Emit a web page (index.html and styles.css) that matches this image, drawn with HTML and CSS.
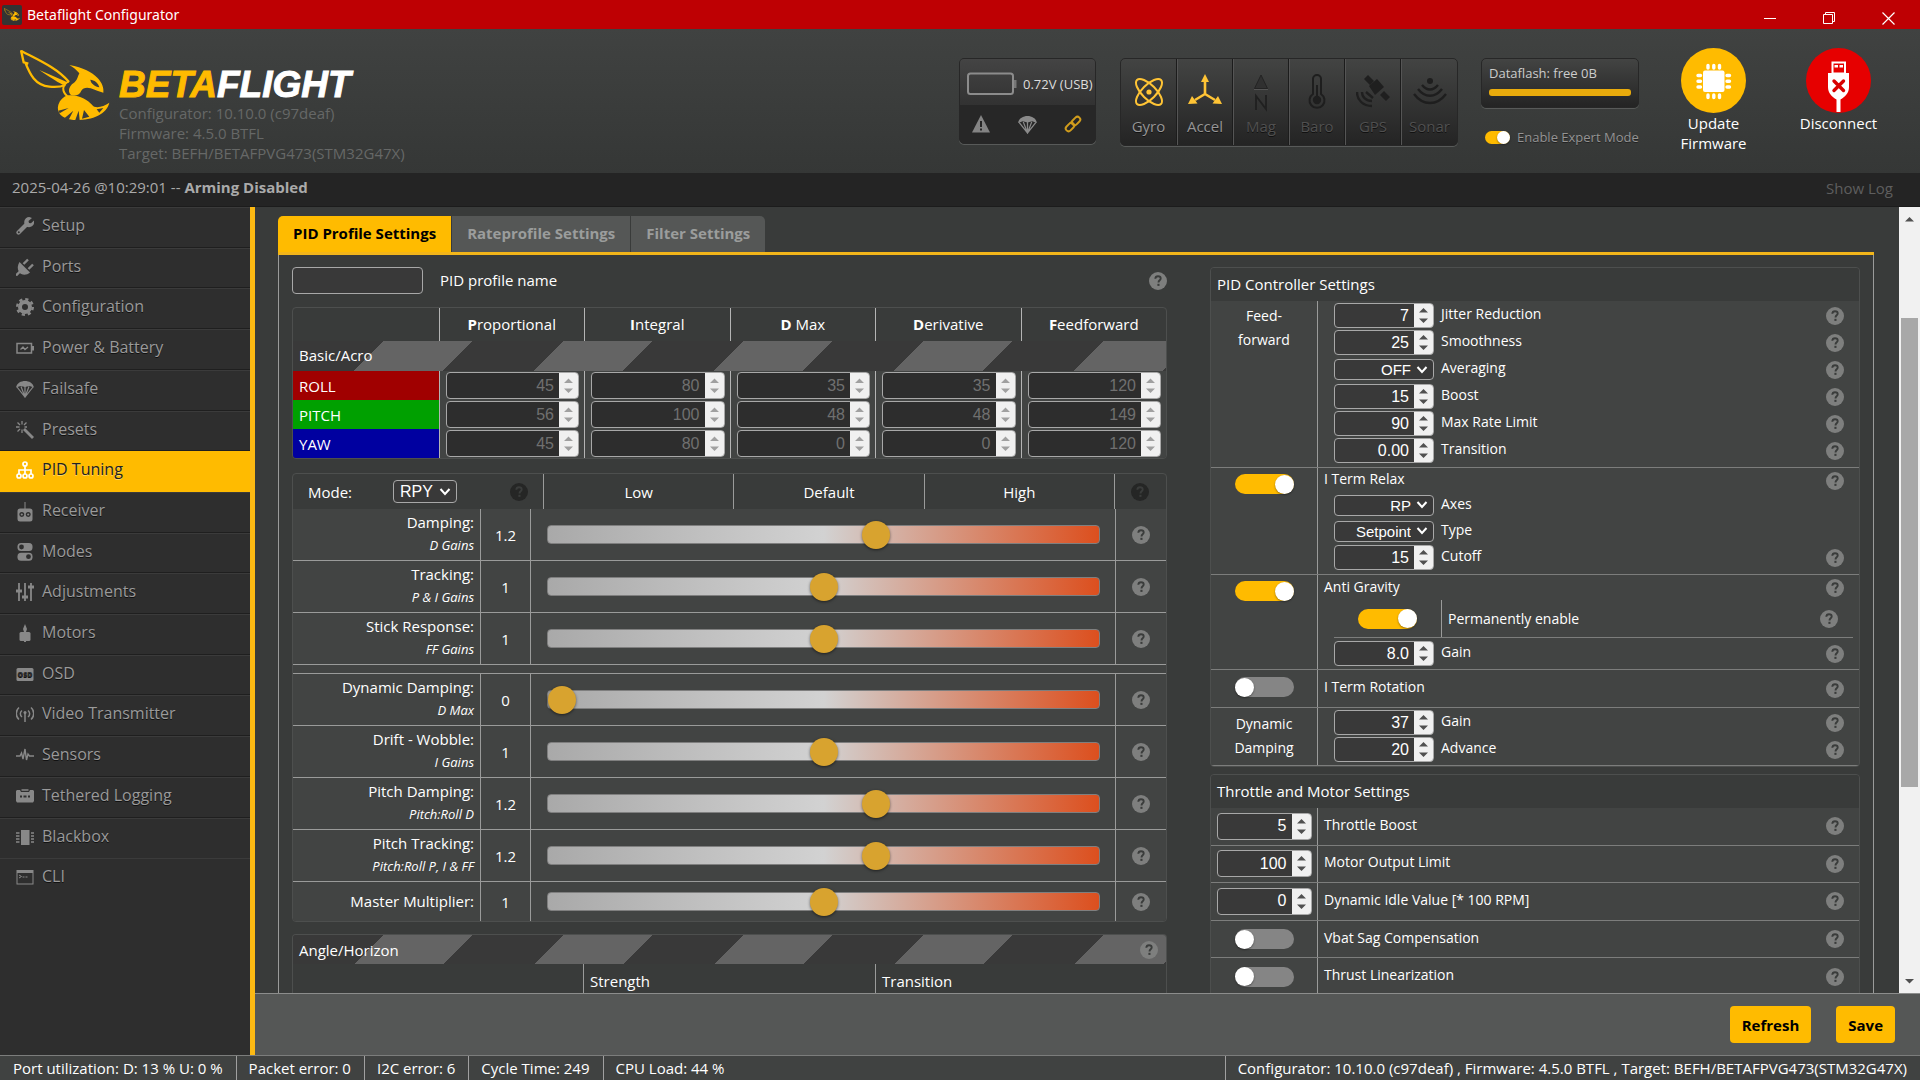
FILE: index.html
```html
<!DOCTYPE html>
<html lang="en">
<head>
<meta charset="utf-8">
<title>Betaflight Configurator</title>
<meta name="viewport" content="width=device-width, initial-scale=1">
<link rel="stylesheet" href="styles.css">
</head>
<body>
<svg class="defs" width="0" height="0" aria-hidden="true">
  <defs>
    <symbol id="help" viewBox="0 0 18 18"><circle cx="9" cy="9" r="9" fill="currentColor"/><path d="M6.3 6.8C6.4 5.1 7.5 4.3 9 4.3s2.7.9 2.7 2.3c0 1.7-2.2 1.8-2.2 3.8" fill="none" stroke="#3a3c3b" stroke-width="1.9"/><rect x="8.4" y="11.8" width="2.1" height="2.1" fill="#3a3c3b"/></symbol>
    <symbol id="bee" viewBox="0 0 270 214">
      <g fill="none" stroke="#ffbb00" stroke-width="7" stroke-linejoin="miter">
        <path d="M4 5 C55 32 110 55 147 98"/>
        <path d="M3 3 L11 39 L25 43 M16 40 C30 75 45 108 88 112 C108 114 122 113 136 107"/>
        <path d="M146 96 C124 108 126 126 142 141" stroke-width="6"/>
      </g>
      <path d="M58 62 L142 99 L136 107 C120 98 108 92 96 84 L140 104 L128 106 C108 96 88 82 58 62Z" fill="#ffbb00"/>
      <path d="M148 47 C190 54 216 69 232 85 C246 99 252 116 250 130 C238 128 226 122 212 117 C200 113 188 116 184 124 C178 138 164 142 152 136 C142 126 148 110 160 102 C172 94 172 84 178 72 C168 60 160 54 148 47Z" fill="#ffbb00"/>
      <path d="M211 91 C222 91 236 102 238 114 C225 111 213 104 211 91Z" fill="#3b3d3c"/>
      <path d="M144 138 C176 134 204 152 216 166 C226 180 250 172 268 160 C260 196 214 214 160 212 C126 208 108 190 115 166 C120 152 130 142 144 138Z" fill="#ffbb00"/>
      <path d="M115 184 L146 176 L119 192Z M133 207 L160 184 L146 211Z M165 214 L176 184 L179 212Z M186 208 L192 182 L208 202Z M238 190 L230 180 L250 176Z" fill="#3b3d3c"/>
    </symbol>
    <symbol id="parachute" viewBox="0 0 18 18"><path d="M0 7.500C1 3 5 1 9 1s8 2 9 6.500L13.500 6 9 7 4.500 6Z" fill="currentColor"/><path d="M1 7l8 10 8-10M5 6.500L9 17l4-10.500M9 6v10" fill="none" stroke="currentColor" stroke-width="1.200"/></symbol>
  </defs>
</svg>

<header class="titlebar">
  <span class="app-icon"><svg width="16" height="13"><use href="#bee"/></svg></span>
  <span class="app-name">Betaflight Configurator</span>
  <div class="window-buttons">
    <button type="button" aria-label="Minimize"><svg width="13" height="13" viewBox="0 0 13 13"><path d="M0 6.500h12" stroke="#fff"/></svg></button>
    <button type="button" aria-label="Restore"><svg width="13" height="13" viewBox="0 0 13 13"><path d="M.5 2.500h9v9h-9zM2.500 2.500v-2h9v9h-2" fill="none" stroke="#fff"/></svg></button>
    <button type="button" aria-label="Close"><svg width="13" height="13" viewBox="0 0 13 13"><path d="M.5 .5l12 12M12.500 .5l-12 12" stroke="#fff" stroke-width="1.200"/></svg></button>
  </div>
</header>

<div class="topbar">
  <div class="logo">
    <svg class="bee" width="90" height="72" role="img" aria-label="Betaflight bee"><use href="#bee"/></svg>
    <div class="logo-text">
      <div class="wordmark"><span>BETA</span>FLIGHT</div>
      <div>Configurator: 10.10.0 (c97deaf)</div>
      <div>Firmware: 4.5.0 BTFL</div>
      <div>Target: BEFH/BETAFPVG473(STM32G47X)</div>
    </div>
  </div>
  <div class="battery panel">
    <div class="battery-top">
      <svg width="50" height="24" viewBox="0 0 50 24"><rect x="1" y="1.500" width="45" height="20.500" rx="2.500" fill="none" stroke="#8c8c8c" stroke-width="2"/><path d="M47 8h2.500v8H47z" fill="#777"/></svg>
      <span>0.72V (USB)</span>
    </div>
    <div class="battery-icons">
      <svg width="18" height="18" viewBox="0 0 18 18"><path d="M9 0l9 17.500H0z" fill="#848484"/><path d="M9 6v6M9 13.500v2" stroke="#262626" stroke-width="2"/></svg>
      <svg class="grey" width="19" height="19"><use href="#parachute"/></svg>
      <svg width="18" height="18" viewBox="0 0 18 18" fill="none" stroke="#d09c1c" stroke-width="2"><rect x="-4.800" y="-2.800" width="9.600" height="5.600" rx="2.800" transform="translate(6 12) rotate(-45)"/><rect x="-4.800" y="-2.800" width="9.600" height="5.600" rx="2.800" transform="translate(12 6) rotate(-45)"/></svg>
    </div>
  </div>
  <ul class="sensors panel">
    <li class="on"><svg width="32" height="36" viewBox="0 0 32 36" fill="none" stroke="#ffc435" stroke-width="2"><ellipse cx="16" cy="18" rx="17" ry="7" transform="rotate(45 16 18)"/><ellipse cx="16" cy="18" rx="17" ry="7" transform="rotate(-45 16 18)"/><circle cx="16" cy="18" r="2.600" fill="#ffc435" stroke="none"/></svg>Gyro</li>
    <li class="on"><svg width="34" height="36" viewBox="0 0 34 36"><path d="M17 8v13M17 20L7 26M17 20l10 6" stroke="#ffc435" stroke-width="2.600" fill="none"/><path d="M17 0l4 8h-8zM0 30l4-8 5.500 7.500zM34 30l-4-8-5.500 7.500z" fill="#ffc435"/></svg>Accel</li>
    <li><svg width="16" height="38" viewBox="0 0 16 38"><path d="M8 1l6.500 13.500h-13z" fill="#303030" stroke="#232323"/><path d="M1 15.500h14" stroke="#555"/><path d="M3 36V22l10 13V21" fill="none" stroke="#202020" stroke-width="1.800"/></svg>Mag</li>
    <li><svg width="20" height="36" viewBox="0 0 20 36"><path d="M6 20V5a4 4 0 0 1 8 0v15a7.500 7.500 0 1 1-8 0Z" fill="none" stroke="#1e1e1e" stroke-width="2"/><circle cx="10" cy="26" r="4.200" fill="#1e1e1e"/><path d="M10 11v14" stroke="#1e1e1e" stroke-width="2"/></svg>Baro</li>
    <li><svg width="34" height="34" viewBox="0 0 34 34"><path d="M8 5l4-4 6 6-4 4zM13 12l8-7 7 8-9 8zM24 21l4-4 6 6-4 4z" fill="#1f1f1f"/><path d="M10 18l7 6M1 18c0 8 6 14 15 14M6 18c0 5 4 9 10 9" fill="none" stroke="#1f1f1f" stroke-width="2.400"/></svg>GPS</li>
    <li><svg width="36" height="34" viewBox="0 0 36 34" fill="none" stroke="#1e1e1e" stroke-width="2.400"><path d="M2 20c9 12 23 12 32 0M6 15c7 9 17 9 24 0M10 11c5 6 11 6 16 0"/><circle cx="18" cy="7" r="3" fill="#1e1e1e" stroke="none"/></svg>Sonar</li>
  </ul>
  <div class="flash">
    <div class="dataflash panel"><label for="df">Dataflash: free 0B</label><progress id="df" value="1" max="1"></progress></div>
    <label class="expert"><input class="switch small" type="checkbox" checked>Enable Expert Mode</label>
  </div>
  <button class="round-action" type="button">
    <svg width="65" height="65" viewBox="0 0 65 65"><circle cx="32.500" cy="32.500" r="32.500" fill="#ffbb00"/><rect x="22" y="22.500" width="21.500" height="21.500" rx="2" fill="#fff"/><path d="M27 17.500v2.500M32.800 17.500v2.500M38.500 17.500v2.500M27 47v2.500M32.800 47v2.500M38.500 47v2.500M17 27.500h2.500M17 33.300h2.500M17 39h2.500M46 27.500h2.500M46 33.300h2.500M46 39h2.500" stroke="#fff" stroke-width="3.400" stroke-linecap="round"/></svg>
    Update<br>Firmware
  </button>
  <button class="round-action" type="button">
    <svg width="65" height="65" viewBox="0 0 65 65"><circle cx="32.500" cy="32.500" r="32.500" fill="#e60000"/><path d="M25.500 13.500h14.500V25H43v14c0 6-4 10-8.500 12.500V64h-4V51.500C26 49 22 45 22 39V25h3.500z" fill="#fff"/><path d="M27.500 15.500h10.500v9h-10.500z" fill="#e60000"/><path d="M28.500 17h3.500v2.500h-3.500zM33.500 17h3.500v2.500h-3.500z" fill="#fff"/><path d="M28 33l9.500 9.500M37.500 33L28 42.500" stroke="#d80000" stroke-width="3.400" stroke-linecap="round"/></svg>
    Disconnect
  </button>
</div>

<div class="logbar"><span>2025-04-26 @10:29:01 -- <b>Arming Disabled</b></span><a href="#">Show Log</a></div>

<div class="middle">
  <nav class="sidebar">
    <a href="#"><svg width="18" height="18" viewBox="0 0 18 18"><path d="M2.500 15.500L10 8" stroke="currentColor" stroke-width="4.200" stroke-linecap="round"/><path d="M16 1l-3.500 3 .5 2 2 .3L17.900 3.500A5 5 0 1 1 14 .2z" fill="currentColor"/><circle cx="2.800" cy="15.300" r="1" fill="#2e2e2e"/></svg>Setup</a>
    <a href="#"><svg width="18" height="18" viewBox="0 0 18 18"><path d="M3.500 4L14 14.500C10 18 5 17 3 14 1 11 1.500 7 3.500 4Z" fill="currentColor"/><path d="M7.500 6L12 1.500M12.500 11L17 6.500M0 17.500l4-4" stroke="currentColor" stroke-width="2.400"/></svg>Ports</a>
    <a href="#"><svg width="18" height="18" viewBox="0 0 18 18" fill="none" stroke="currentColor"><circle cx="9" cy="9" r="5" stroke-width="4"/><circle cx="9" cy="9" r="7.800" stroke-width="2.400" stroke-dasharray="3.200 2.926"/></svg>Configuration</a>
    <a href="#"><svg width="18" height="18" viewBox="0 0 18 18" fill="none" stroke="currentColor"><rect x="1" y="4.500" width="14.500" height="9.500" stroke-width="1.500"/><path d="M17 7v4.500" stroke-width="2"/><path d="M4.500 10.500L7 8l2 2.500L12 8" stroke-width="1.300"/></svg>Power &amp; Battery</a>
    <a href="#"><svg width="18" height="18"><use href="#parachute"/></svg>Failsafe</a>
    <a href="#"><svg width="18" height="18" viewBox="0 0 18 18" stroke="currentColor" fill="none"><path d="M8 8l9 9" stroke-width="2.800"/><path d="M6 0v3.500M6 8.500V12M0 6h3.500M1.500 1.500L4 4M10.500 1.500L8 4M1.500 10.500L4 8M8.500 6H11" stroke-width="1.300"/></svg>Presets</a>
    <a class="active" href="#" aria-current="page"><svg width="18" height="18" viewBox="0 0 18 18" fill="none" stroke="currentColor" stroke-width="1.700"><circle cx="9" cy="3" r="2"/><circle cx="3" cy="15" r="2"/><circle cx="9" cy="15" r="2"/><circle cx="15" cy="15" r="2"/><path d="M9 5v8M3 13V9h12v4"/></svg>PID Tuning</a>
    <a href="#"><svg width="18" height="20" viewBox="0 0 18 20"><rect x="1.500" y="6.500" width="15" height="13" rx="2.500" fill="currentColor"/><path d="M9 0v7" stroke="currentColor"/><g fill="currentColor" stroke="#2e2e2e" stroke-width="1.400"><circle cx="5.800" cy="12.500" r="1.800"/><circle cx="12.200" cy="12.500" r="1.800"/></g></svg>Receiver</a>
    <a href="#"><svg width="18" height="18" viewBox="0 0 18 18"><rect x="1.500" y="0" width="15" height="8" rx="3.500" fill="currentColor"/><rect x="1.500" y="9.700" width="15" height="8" rx="3.500" fill="currentColor"/><circle cx="5.500" cy="4" r="2.400" fill="#2e2e2e"/><circle cx="12.500" cy="13.700" r="2.400" fill="#2e2e2e"/></svg>Modes</a>
    <a href="#"><svg width="18" height="18" viewBox="0 0 18 18" stroke="currentColor" fill="none"><path d="M3 0v18M9 0v18M15 0v18" stroke-width="1.800"/><path d="M0 8h6M6 14h6M12 4h6" stroke-width="3"/></svg>Adjustments</a>
    <a href="#"><svg width="18" height="18" viewBox="0 0 18 18"><rect x="3.500" y="8" width="11" height="9" rx="1.500" fill="currentColor"/><path d="M9 0l2 5-1 3H8L7 5zM8 17h2v1H8z" fill="currentColor"/></svg>Motors</a>
    <a href="#"><svg width="18" height="18" viewBox="0 0 18 18"><rect x=".5" y="3" width="17" height="13" rx="1.500" fill="currentColor"/><text x="9" y="12" font-family="Open Sans, sans-serif" font-weight="800" font-size="7" text-anchor="middle" fill="#2e2e2e">OSD</text></svg>OSD</a>
    <a href="#"><svg width="18" height="18" viewBox="0 0 18 18" fill="none" stroke="currentColor" stroke-width="1.500"><path d="M9 7v10M6 5.500a4 4 0 0 0 0 6.500M12 5.500a4 4 0 0 1 0 6.500M3 2.500a8 8 0 0 0 0 12M15 2.500a8 8 0 0 1 0 12"/><circle cx="9" cy="7.500" r="1.500" fill="currentColor" stroke="none"/></svg>Video Transmitter</a>
    <a href="#"><svg width="18" height="18" viewBox="0 0 18 18" fill="none" stroke="currentColor" stroke-width="1.400"><path d="M0 10h4l1.500-3 1.500 6 2-10 1.500 11L12 8l1.500 2H18"/></svg>Sensors</a>
    <a href="#"><svg width="18" height="18" viewBox="0 0 18 18"><path d="M0 4l1-1h3l1 2h8l1-2h3l1 1v10l-1 1.500H1L0 14z" fill="currentColor"/><path d="M5.500 3h7" stroke="currentColor" stroke-width="1.500"/><path d="M4 9.500h2M7.500 9.500h3M12 9.500h2" stroke="#2e2e2e" stroke-width="2"/></svg>Tethered Logging</a>
    <a href="#"><svg width="18" height="18" viewBox="0 0 18 18"><path d="M5 2h8.500v15H5z" fill="currentColor"/><path d="M0 5h3.500M0 8h3.500M0 11h3.500M0 14h3.500M15 5h3M15 8h3M15 11h3M15 14h3" stroke="currentColor" stroke-width="1.500"/></svg>Blackbox</a>
    <a href="#"><svg width="18" height="18" viewBox="0 0 18 18" fill="none" stroke="currentColor"><rect x="1" y="2.500" width="16" height="13.500"/><path d="M1 4h16" stroke-width="2"/><path d="M3 7l2.500 1.500L3 10M6.500 9h2M9.500 9h2"/></svg>CLI</a>
  </nav>

  <div class="content">
    <div class="viewport">
      <main class="scroller">
        <div class="tabs" role="tablist">
          <button type="button" role="tab" aria-selected="true">PID Profile Settings</button>
          <button type="button" role="tab" aria-selected="false">Rateprofile Settings</button>
          <button type="button" role="tab" aria-selected="false">Filter Settings</button>
        </div>
        <div class="tab-body">
          <section class="left">
            <div class="profile-row"><input type="text" id="profile"><label for="profile">PID profile name</label><svg class="help"><use href="#help"/></svg></div>
            <table class="card pid-table">
              <thead><tr><td></td><th><b>P</b>roportional</th><th><b>I</b>ntegral</th><th><b>D</b> Max</th><th><b>D</b>erivative</th><th><b>F</b>eedforward</th></tr></thead>
              <tbody>
                <tr class="mode-row"><td class="stripe" colspan="6">Basic/Acro</td></tr>
                <tr><th class="roll" scope="row">ROLL</th><td><input type="number" disabled value="45" aria-label="Roll P"></td><td><input type="number" disabled value="80" aria-label="Roll I"></td><td><input type="number" disabled value="35" aria-label="Roll D Max"></td><td><input type="number" disabled value="35" aria-label="Roll D"></td><td><input type="number" disabled value="120" aria-label="Roll F"></td></tr>
                <tr><th class="pitch" scope="row">PITCH</th><td><input type="number" disabled value="56" aria-label="Pitch P"></td><td><input type="number" disabled value="100" aria-label="Pitch I"></td><td><input type="number" disabled value="48" aria-label="Pitch D Max"></td><td><input type="number" disabled value="48" aria-label="Pitch D"></td><td><input type="number" disabled value="149" aria-label="Pitch F"></td></tr>
                <tr><th class="yaw" scope="row">YAW</th><td><input type="number" disabled value="45" aria-label="Yaw P"></td><td><input type="number" disabled value="80" aria-label="Yaw I"></td><td><input type="number" disabled value="0" aria-label="Yaw D Max"></td><td><input type="number" disabled value="0" aria-label="Yaw D"></td><td><input type="number" disabled value="120" aria-label="Yaw F"></td></tr>
              </tbody>
            </table>

            <div class="card sliders">
              <div class="slider-head">
                <div class="mode"><label for="mode">Mode:</label><select id="mode"><option>RPY</option></select><svg class="help dark"><use href="#help"/></svg></div>
                <div>Low</div><div>Default</div><div>High</div><div><svg class="help dark"><use href="#help"/></svg></div>
              </div>
              <div class="slider-row"><label for="s1">Damping:<i>D Gains</i></label><output>1.2</output><div class="track"><input id="s1" type="range" min="0" max="2" step="0.05" value="1.2"></div><svg class="help"><use href="#help"/></svg></div>
              <div class="slider-row"><label for="s2">Tracking:<i>P &amp; I Gains</i></label><output>1</output><div class="track"><input id="s2" type="range" min="0" max="2" step="0.05" value="1"></div><svg class="help"><use href="#help"/></svg></div>
              <div class="slider-row"><label for="s3">Stick Response:<i>FF Gains</i></label><output>1</output><div class="track"><input id="s3" type="range" min="0" max="2" step="0.05" value="1"></div><svg class="help"><use href="#help"/></svg></div>
              <div class="slider-gap"></div>
              <div class="slider-row"><label for="s4">Dynamic Damping:<i>D Max</i></label><output>0</output><div class="track"><input id="s4" type="range" min="0" max="2" step="0.05" value="0"></div><svg class="help"><use href="#help"/></svg></div>
              <div class="slider-row"><label for="s5">Drift - Wobble:<i>I Gains</i></label><output>1</output><div class="track"><input id="s5" type="range" min="0" max="2" step="0.05" value="1"></div><svg class="help"><use href="#help"/></svg></div>
              <div class="slider-row"><label for="s6">Pitch Damping:<i>Pitch:Roll D</i></label><output>1.2</output><div class="track"><input id="s6" type="range" min="0" max="2" step="0.05" value="1.2"></div><svg class="help"><use href="#help"/></svg></div>
              <div class="slider-row"><label for="s7">Pitch Tracking:<i>Pitch:Roll P, I &amp; FF</i></label><output>1.2</output><div class="track"><input id="s7" type="range" min="0" max="2" step="0.05" value="1.2"></div><svg class="help"><use href="#help"/></svg></div>
              <div class="slider-row last"><label for="s8">Master Multiplier:</label><output>1</output><div class="track"><input id="s8" type="range" min="0" max="2" step="0.05" value="1"></div><svg class="help"><use href="#help"/></svg></div>
            </div>

            <div class="card angle">
              <div class="stripe angle-title"><span>Angle/Horizon</span><svg class="help"><use href="#help"/></svg></div>
              <div class="angle-head"><span></span><span>Strength</span><span>Transition</span></div>
            </div>
          </section>

          <section class="right">
            <div class="card">
              <h2>PID Controller Settings</h2>
              <div class="group ff"><div class="side">Feed-<br>forward</div><div class="fields">
                <div class="field"><input type="number" id="f1" value="7"><label for="f1">Jitter Reduction</label><svg class="help"><use href="#help"/></svg></div>
                <div class="field"><input type="number" id="f2" value="25"><label for="f2">Smoothness</label><svg class="help"><use href="#help"/></svg></div>
                <div class="field"><select id="f3"><option>OFF</option></select><label for="f3">Averaging</label><svg class="help"><use href="#help"/></svg></div>
                <div class="field"><input type="number" id="f4" value="15"><label for="f4">Boost</label><svg class="help"><use href="#help"/></svg></div>
                <div class="field"><input type="number" id="f5" value="90"><label for="f5">Max Rate Limit</label><svg class="help"><use href="#help"/></svg></div>
                <div class="field"><input type="text" inputmode="decimal" class="num" id="f6" value="0.00"><label for="f6">Transition</label><svg class="help"><use href="#help"/></svg></div>
              </div></div>
              <div class="group relax"><div class="side"><input id="relax" class="switch" type="checkbox" checked></div><div class="fields">
                <div class="field title"><label for="relax">I Term Relax</label><svg class="help"><use href="#help"/></svg></div>
                <div class="field"><select id="f7"><option>RP</option></select><label for="f7">Axes</label></div>
                <div class="field"><select id="f8"><option>Setpoint</option></select><label for="f8">Type</label></div>
                <div class="field"><input type="number" id="f9" value="15"><label for="f9">Cutoff</label><svg class="help"><use href="#help"/></svg></div>
              </div></div>
              <div class="group gravity"><div class="side"><input id="gravity" class="switch" type="checkbox" checked></div><div class="fields">
                <div class="field title"><label for="gravity">Anti Gravity</label><svg class="help"><use href="#help"/></svg></div>
                <div class="nested"><div><input id="perm" class="switch" type="checkbox" checked></div><label for="perm">Permanently enable</label><svg class="help"><use href="#help"/></svg></div>
                <div class="field"><input type="text" inputmode="decimal" class="num" id="f10" value="8.0"><label for="f10">Gain</label><svg class="help"><use href="#help"/></svg></div>
              </div></div>
              <div class="group rotation"><div class="side"><input id="rotation" class="switch" type="checkbox"></div><div class="fields single">
                <div class="field title"><label for="rotation">I Term Rotation</label><svg class="help"><use href="#help"/></svg></div>
              </div></div>
              <div class="group"><div class="side">Dynamic<br>Damping</div><div class="fields">
                <div class="field"><input type="number" id="f11" value="37"><label for="f11">Gain</label><svg class="help"><use href="#help"/></svg></div>
                <div class="field"><input type="number" id="f12" value="20"><label for="f12">Advance</label><svg class="help"><use href="#help"/></svg></div>
              </div></div>
            </div>

            <div class="card motor">
              <h2>Throttle and Motor Settings</h2>
              <div class="motor-rows">
                <div class="group"><div class="side"><input type="number" id="m1" value="5"></div><div class="fields single"><div class="field title"><label for="m1">Throttle Boost</label><svg class="help"><use href="#help"/></svg></div></div></div>
                <div class="group"><div class="side"><input type="number" id="m2" value="100"></div><div class="fields single"><div class="field title"><label for="m2">Motor Output Limit</label><svg class="help"><use href="#help"/></svg></div></div></div>
                <div class="group"><div class="side"><input type="number" id="m3" value="0"></div><div class="fields single"><div class="field title"><label for="m3">Dynamic Idle Value [* 100 RPM]</label><svg class="help"><use href="#help"/></svg></div></div></div>
                <div class="group"><div class="side"><input type="checkbox" class="switch" id="m4"></div><div class="fields single"><div class="field title"><label for="m4">Vbat Sag Compensation</label><svg class="help"><use href="#help"/></svg></div></div></div>
                <div class="group"><div class="side"><input type="checkbox" class="switch" id="m5"></div><div class="fields single"><div class="field title"><label for="m5">Thrust Linearization</label><svg class="help"><use href="#help"/></svg></div></div></div>
              </div>
            </div>
          </section>
        </div>
      </main>
      <div class="scrollbar" aria-hidden="true">
        <svg width="21" height="24" viewBox="0 0 21 24"><path d="M6 14.500h9l-4.500-4.500z" fill="#505050"/></svg>
        <div class="scroll-lane"><div class="scroll-thumb"></div></div>
        <svg width="21" height="24" viewBox="0 0 21 24"><path d="M6 10h9l-4.500 4.500z" fill="#505050"/></svg>
      </div>
    </div>
    <div class="toolbar"><button type="button">Refresh</button><button type="button">Save</button></div>
  </div>
</div>

<footer class="statusbar">
  <span>Port utilization: D: 13 % U: 0 %</span><span>Packet error: 0</span><span>I2C error: 6</span><span>Cycle Time: 249</span><span>CPU Load: 44 %</span>
  <span class="version">Configurator: 10.10.0 (c97deaf) , Firmware: 4.5.0 BTFL , Target: BEFH/BETAFPVG473(STM32G47X)</span>
</footer>
</body>
</html>
```
FILE: styles.css
```css
:root {
  --amber: #ffbb00;
  --page: #393b3a;
  --row: #424443;
  --line: #9a9b9a;
  --rule: #7c7d7c;
}
* { box-sizing: border-box; }
body {
  margin: 0;
  height: 100vh;
  display: flex;
  flex-direction: column;
  overflow: hidden;
  background: var(--page);
  color: #fff;
  font: 15px/20px "Open Sans", "Noto Sans", sans-serif;
}
button, input, select { font: inherit; color: inherit; margin: 0; }
button { border: 0; background: none; padding: 0; }
svg { display: block; flex: none; }
a { color: inherit; text-decoration: none; }
.defs { position: absolute; }

/* Window title */
.titlebar { display: flex; align-items: center; height: 29px; flex: none; background: #be0003; padding: 0 2px; }
.app-icon { width: 20px; height: 20px; background: #333; border-radius: 2px; display: grid; place-items: center; }
.app-name { margin-left: 5px; font-size: 14px; font-family: "Noto Sans", sans-serif; }
.window-buttons { margin-left: auto; display: flex; }
.window-buttons button { width: 59px; height: 29px; display: grid; place-items: center; padding-top: 7px; }

/* Header */
.topbar { display: flex; height: 144px; flex: none; background: linear-gradient(#404241, #353736); }
.topbar > * { flex: none; }
.logo { display: flex; padding-left: 20px; margin-right: auto; color: #666867; }
.bee { margin-top: 20px; }
.logo-text { padding-left: 9px; padding-top: 38px; }
.wordmark { font: italic bold 37px/36px "Liberation Sans", Arial, sans-serif; color: #fff; -webkit-text-stroke: 1px; }
.wordmark span { color: var(--amber); }
.panel {
  border: 1px solid #272727;
  border-radius: 5px;
  background: linear-gradient(#434443, #242424);
  box-shadow: 0 1px 0 #585a59;
}
.battery { width: 137px; height: 86px; margin-top: 29px; background: #272727; overflow: hidden; }
.battery-top { display: flex; gap: 6px; height: 46px; padding: 3px 0 0 7px; align-items: center; background: linear-gradient(#444, #323232); font-size: 13px; white-space: nowrap; color: #ddd; }
.battery-icons { display: flex; height: 38px; align-items: center; justify-content: space-between; padding: 0 13px 0 12px; }
.grey { color: #8a8a8a; }
.sensors { list-style: none; margin: 29px 0 0 24px; padding: 0; height: 88px; display: flex; }
.sensors li { width: 56px; border-left: 1px solid #555; border-right: 1px solid #1c1c1c; display: flex; flex-direction: column; justify-content: space-between; align-items: center; padding: 15px 0 9px; color: #505050; text-shadow: 0 1px #111; }
.sensors li:first-child { border-left: 0; }
.sensors li:last-child { border-right: 0; }
.sensors .on { color: #969696; }
.flash { width: 158px; margin: 29px 32px 0 23px; }
.dataflash { height: 50px; padding: 4px 7px; font-size: 13px; color: #ccc; }
.dataflash label { display: block; }
progress { display: block; appearance: none; width: 100%; height: 7px; margin-top: 6px; border: 0; border-radius: 3px; overflow: hidden; }
progress::-webkit-progress-bar { background: #333; }
progress::-webkit-progress-value { background: #e9ab0c; }
.expert { display: flex; align-items: center; gap: 7px; margin: 19px 0 0 4px; font-size: 13px; color: #949494; white-space: nowrap; text-shadow: 0 1px #222; }
.round-action { width: 85px; margin: 19px 40px 0 0; display: flex; flex-direction: column; align-items: center; justify-content: flex-start; line-height: 20px; }
.round-action:last-child { margin-right: 39px; }

.logbar { display: flex; justify-content: space-between; height: 34px; flex: none; background: #242424; padding: 4px 27px 0 12px; color: #aaa; border-bottom: 1px solid #1c1c1c; }
.logbar a { color: #5e5e5e; padding-top: 1px; }

.middle { flex: 1; min-height: 0; display: flex; }

/* Navigation */
.sidebar { width: 255px; flex: none; background: #2e2e2e; border-right: 5px solid #fcb913; display: grid; grid-template-rows: repeat(17, minmax(0, 1fr)); padding-bottom: 156px; }
.sidebar a { display: flex; gap: 8px; padding: 7px 0 0 16px; font-size: 16px; color: #9a9a9a; border-top: 1px solid #3b3b3b; border-bottom: 1px solid #1f1f1f; text-shadow: 0 1px #111; }
.sidebar a:last-child, .sidebar a:nth-last-child(2) { border-bottom: 0; }
.sidebar svg { margin-top: 2px; color: #888; }
.sidebar .active { background: var(--amber); color: #222; border-color: var(--amber); text-shadow: 0 1px #ffd566; }
.sidebar .active svg { color: #fff; }

/* Content */
.content { flex: 1; min-width: 0; display: flex; flex-direction: column; }
.viewport { flex: 1; min-height: 0; display: flex; }
.scroller { flex: 1; min-width: 0; overflow: hidden; padding: 9px 25px 0 23px; }
.tabs { display: flex; gap: 1px; border-bottom: 3px solid #f2b51a; }
.tabs button { height: 36px; padding: 0 15px 3px; background: #555756; color: #9b9d9c; font-weight: 700; }
.tabs button:first-child { border-radius: 5px 0 0 0; }
.tabs button:last-child { border-radius: 0 5px 0 0; }
.tabs [aria-selected="true"] { background: var(--amber); color: #000; }
.tab-body { display: grid; grid-template-columns: 875fr 650fr; gap: 43px; padding: 12px 13px 0; border: solid var(--line); border-width: 0 1px; }
.card { border: 1px solid #4d4f4e; border-radius: 4px; overflow: hidden; }
.help { width: 18px; height: 18px; color: #7e7f7e; }
.help.dark { color: #252625; }

input[type="number"], input[type="text"], select { border: 1px solid #a8a8a8; border-radius: 4px; background-color: #393939; }
input[type="number"], .num {
  appearance: textfield;
  font: 16px "Liberation Sans", Arial, sans-serif;
  text-align: right;
  padding: 0 24px 0 4px;
  background: url("data:image/svg+xml,%3Csvg xmlns='http://www.w3.org/2000/svg' width='19' height='25'%3E%3Crect width='19' height='25' fill='%23f0f0f0'/%3E%3Cpath d='M5 9.500h9L9.500 5zM5 15.500h9L9.500 20z' fill='%23505050'/%3E%3C/svg%3E") right center no-repeat #393939;
}
input[type="number"]::-webkit-inner-spin-button { appearance: none; margin: 0; }
input[type="number"]:disabled {
  color: #707070;
  background: url("data:image/svg+xml,%3Csvg xmlns='http://www.w3.org/2000/svg' width='19' height='25'%3E%3Crect width='19' height='25' fill='%23f0f0f0'/%3E%3Cpath d='M5 10h9L9.500 5.500zM5 15.500h9L9.500 20z' fill='%23a0a0a0'/%3E%3C/svg%3E") right center no-repeat #2d2d2d;
}
select {
  appearance: none;
  font: 15px/19px "Liberation Sans", Arial, sans-serif;
  text-align: right;
  text-align-last: right;
  padding: 0 22px 0 0;
  background: url("data:image/svg+xml,%3Csvg xmlns='http://www.w3.org/2000/svg' width='12' height='8'%3E%3Cpath d='M1.500 1l4.500 5 4.500-5' fill='none' stroke='%23fff' stroke-width='2'/%3E%3C/svg%3E") right 5px center no-repeat #393939;
}

.switch { appearance: none; flex: none; width: 59px; height: 20px; border-radius: 10px; background: #858585; display: flex; align-items: center; }
.switch::before { content: ""; width: 19px; height: 19px; border-radius: 50%; background: #fff; box-shadow: 0 1px 2px #0006; }
.switch:checked { background: var(--amber); justify-content: flex-end; }
.switch.small { width: 25px; height: 13px; }
.switch.small::before { width: 13px; height: 13px; }

.profile-row { display: flex; align-items: center; height: 27px; margin-bottom: 13px; }
.profile-row input { width: 131px; height: 27px; padding: 0 6px; }
.profile-row label { margin-left: 17px; padding-bottom: 2px; }
.profile-row .help { margin-left: auto; }

.pid-table { width: 100%; table-layout: fixed; border-spacing: 0; border-collapse: separate; margin-bottom: 14px; }
.pid-table th, .pid-table td { padding: 0; font-weight: 400; }
.pid-table thead th { height: 33px; padding-bottom: 2px; }
.pid-table th + th, .pid-table th + td, .pid-table td + th, .pid-table td + td { border-left: 1px solid #b4b4b4; }
.pid-table b { font-weight: 700; }
.stripe { background: linear-gradient(135deg, #393939 64px, #646464 64px 127px, #393939 127px) 0 0 / 180px 100%; }
.pid-table .stripe { height: 30px; padding: 0 0 2px 6px; }
.pid-table tbody tr:not(.mode-row) { background: var(--row); height: 29px; }
.pid-table tbody th { text-align: left; padding: 1px 0 0 6px; }
.pid-table td input { display: block; width: calc(100% - 11px); height: 27px; margin: 1px auto 1px 6px; }
.roll { background: #a00000; }
.pitch { background: #00a000; }
.yaw { background: #0000a0; }

.sliders { margin-bottom: 12px; }
.slider-head { display: grid; grid-template-columns: 250px 1fr 1fr 1fr 52px; height: 35px; }
.slider-head > div { display: grid; place-items: center; border-left: 1px solid var(--line); }
.slider-head > .mode { display: flex; border-left: 0; align-items: center; padding: 0 15px; }
.mode label { width: 85px; }
.mode select { width: 64px; height: 23px; font-size: 16px; text-align-last: left; padding: 0 0 0 6px; }
.mode .help { margin-left: auto; }
.slider-row { display: grid; grid-template-columns: 187px 51px 1fr 50px; height: 52px; background: var(--row); border-bottom: 1px solid var(--line); align-items: center; }
.slider-row label { text-align: right; line-height: 23px; padding: 0 6px 1px 0; white-space: nowrap; }
.slider-row i { display: block; font-size: 13px; }
.slider-row output { align-self: stretch; display: grid; place-items: center; border: solid var(--line); border-width: 0 1px; }
.slider-row .track { align-self: stretch; display: flex; align-items: center; padding: 0 15px 0 16px; border-right: 1px solid var(--line); }
.slider-row .help { justify-self: center; }
.slider-row.last { height: 39px; border-bottom: 0; }
.slider-gap { height: 9px; background: var(--row); border-bottom: 1px solid var(--line); }
input[type="range"] { appearance: none; width: 100%; height: 28px; background: none; }
input[type="range"]::-webkit-slider-runnable-track { height: 19px; border: 1px solid #7f7f7f; border-radius: 4px; background: linear-gradient(90deg, #a9a9a9, #d2d2d2 50%, #dc4f1e); }
input[type="range"]::-webkit-slider-thumb { appearance: none; width: 28px; height: 28px; margin-top: -5px; border-radius: 50%; background: #d8a32f; box-shadow: 0 1px 3px #0008; }

.angle { border-bottom: 0; }
.angle-title { display: flex; align-items: center; justify-content: space-between; height: 29px; padding: 0 8px 0 6px; }
.angle-head { display: grid; grid-template-columns: 290px 292px 1fr; height: 60px; }
.angle-head span { padding: 7px 6px; }
.angle-head span + span { border-left: 1px solid var(--line); }

/* Right column */
.right { font-size: 14px; }
.right .card { background: var(--row); }
h2 { margin: 0; height: 33px; padding: 6px 6px 0; font-size: 15px; font-weight: 400; line-height: 20px; background: var(--page); }
.group { display: grid; grid-template-columns: 106px 1fr; border-bottom: 1px solid var(--rule); }
.side { display: flex; justify-content: center; text-align: center; line-height: 24px; padding: 4px 0; }
.fields { border-left: 1px solid var(--line); padding: 1px 15px 2px 16px; }
.field { display: flex; align-items: center; height: 27px; }
.field input, .field select { width: 100px; flex: none; }
.field input { height: 25px; }
.field select { height: 21px; }
.field input + label, .field select + label { margin-left: 7px; }
.field label { padding-bottom: 3px; }
.field .help { margin-left: auto; }
.field.title { margin-left: -10px; }
.ff .side { padding-top: 3px; }
.ff .fields { padding-bottom: 3px; }
.relax .fields { padding-bottom: 3px; }
.relax .side, .gravity .side { padding-top: 6px; }
.relax .title { height: 23px; }
.gravity .title { height: 24px; }
.relax .field:not(.title) { height: 26px; }
.relax .field:last-child { height: 27px; }
.gravity .field:last-child { margin-top: 2px; }
.nested { display: grid; grid-template-columns: 107px 1fr 18px; align-items: center; height: 38px; border-bottom: 1px solid var(--rule); margin-right: -9px; padding-right: 15px; }
.nested > div { padding-left: 24px; height: 37px; display: flex; align-items: center; }
.nested label { border-left: 1px solid var(--line); padding-left: 6px; line-height: 37px; }
.fields.single { display: grid; align-items: center; padding-top: 0; padding-bottom: 0; height: 37px; }
.rotation .side { padding-top: 7px; }
.motor { margin-top: 7px; }
.motor-rows { display: grid; grid-template-rows: repeat(5, 1fr); height: 188px; }
.motor-rows .side, .motor-rows .fields { align-items: center; height: auto; padding-top: 0; padding-bottom: 0; }
.motor-rows .side input[type="number"] { width: 95px; height: 27px; }

/* Vertical scroll bar */
.scrollbar { width: 21px; display: flex; flex-direction: column; background: #f1f1f1; }
.scroll-lane { flex: 1; padding: 87px 2px 0; }
.scroll-thumb { height: 72%; background: #a8a8a8; }

.toolbar { height: 62px; flex: none; display: flex; justify-content: flex-end; gap: 25px; padding: 12px 25px 0; background: #555756; border-top: 1px solid #8c8d8c; }
.toolbar button { height: 37px; padding: 0 12px; border-radius: 4px; background: var(--amber); color: #000; font-weight: 700; }

.statusbar { display: flex; height: 25px; flex: none; background: #404241; border-top: 1px solid #7c7d7c; line-height: 24px; white-space: nowrap; }
.statusbar span { padding: 0 13px; }
.statusbar span + span { border-left: 1px solid #a0a0a0; padding-left: 12px; }
.statusbar .version { margin-left: auto; }
```
